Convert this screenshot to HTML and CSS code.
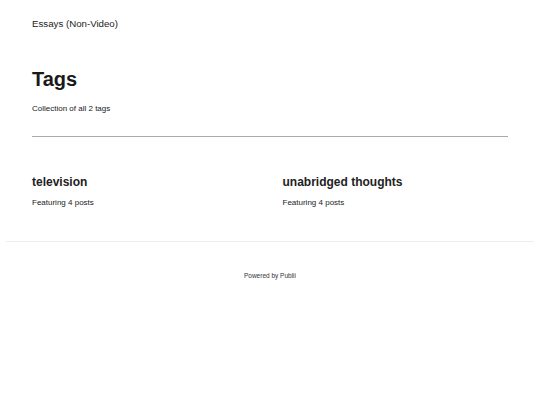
FILE: index.html
```html
<!DOCTYPE html>
<html lang="en">
<head>
    <meta charset="UTF-8">
    <meta name="viewport" content="width=device-width, initial-scale=1.0">
    <title>Tags - Essays (Non-Video)</title>
    <link rel="stylesheet" href="styles.css">
</head>
<body>
    <header class="top">
        <a href="#" class="logo">Essays (Non-Video)</a>
    </header>
    <main class="wrap">
        <h1 class="title">Tags</h1>
        <p class="desc">Collection of all 2 tags</p>
        <hr class="sep">
        <div class="tags">
            <article class="tag">
                <h2><a href="#">television</a></h2>
                <p>Featuring 4 posts</p>
            </article>
            <article class="tag">
                <h2><a href="#">unabridged thoughts</a></h2>
                <p>Featuring 4 posts</p>
            </article>
        </div>
    </main>
    <footer class="foot">
        <p>Powered by <a href="#">Publii</a></p>
    </footer>
</body>
</html>
```

FILE: styles.css
```css
*{
    margin: 0;
    padding: 0;
    box-sizing: border-box;
}
body{
    font-family: "Liberation Sans", Arial, sans-serif;
    color: #222;
    background: #fff;
}
a{
    color: inherit;
    text-decoration: none;
}
.top{
    padding: 18px 32px 0;
}
.logo{
    display: block;
    font-size: 9.7px;
    line-height: 12px;
}
.wrap{
    padding: 0 32px;
}
.title{
    font-size: 20px;
    line-height: 24px;
    margin-top: 37px;
    color: #1a1a1a;
}
.desc{
    font-size: 8px;
    line-height: 10px;
    margin-top: 13px;
}
.sep{
    border: 0;
    border-top: 1px solid #aaa;
    margin-top: 22px;
}
.tags{
    display: grid;
    grid-template-columns: 1fr 1fr;
    column-gap: 25px;
    padding: 38px 0 33px;
}
.tag h2{
    font-size: 12px;
    line-height: 14px;
}
.tag p{
    font-size: 8px;
    line-height: 10px;
    margin-top: 9px;
}
.foot{
    margin: 0 6px;
    border-top: 1px solid #eee;
    padding-top: 30px;
    text-align: center;
    font-size: 6.5px;
    line-height: 8px;
    color: #333;
}
```
